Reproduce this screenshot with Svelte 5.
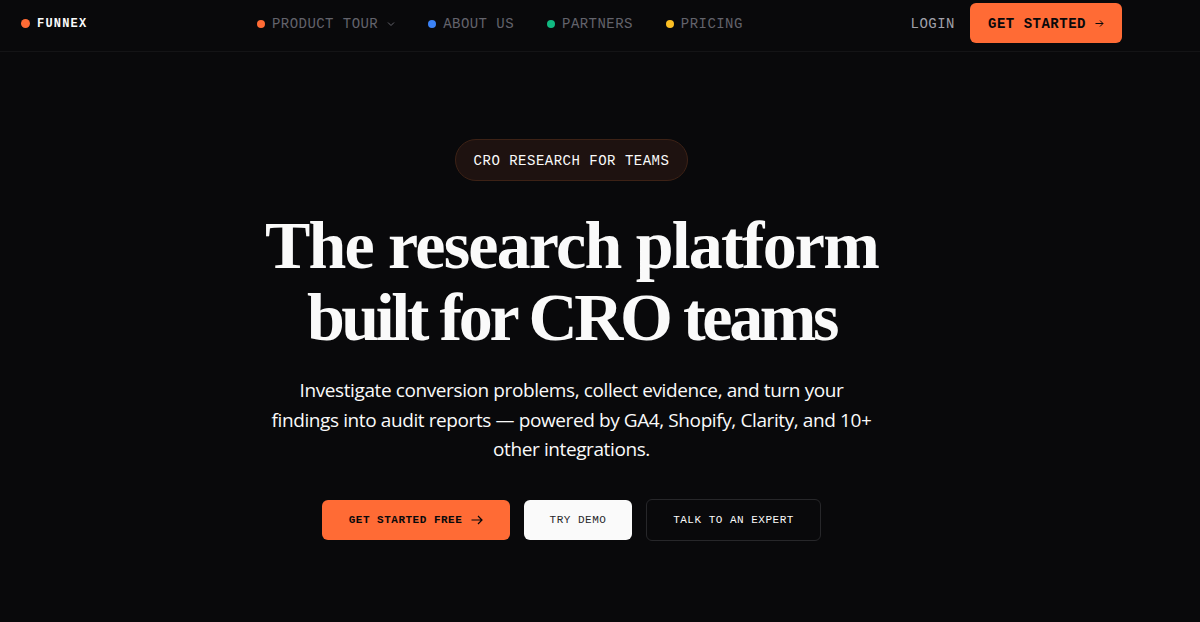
<script lang="ts">
    const links = [
        { label: 'PRODUCT TOUR', color: '#ff6b35', caret: true },
        { label: 'ABOUT US', color: '#3b82f6', caret: false },
        { label: 'PARTNERS', color: '#10b981', caret: false },
        { label: 'PRICING', color: '#fbbf24', caret: false }
    ];
</script>

<div class="page">
    <header class="topbar">
        <div class="logo">
            <span class="logo-dot"></span>
            <span class="logo-text">FUNNEX</span>
        </div>

        <nav class="links">
            {#each links as link}
                <a class="link" href="#top">
                    <span class="dot" style="background: {link.color}"></span>
                    {link.label}
                    {#if link.caret}
                        <svg class="caret" width="8" height="6" viewBox="0 0 8 6" fill="none">
                            <path d="M1 1.5 4 4.5 7 1.5" stroke="currentColor" stroke-width="1" />
                        </svg>
                    {/if}
                </a>
            {/each}
        </nav>

        <div class="actions">
            <a class="login" href="#top">LOGIN</a>
            <a class="btn-top" href="#top">
                GET STARTED
                <svg width="9" height="9" viewBox="0 0 9 9" fill="none">
                    <path d="M0.5 4.5H8M5 1.5 8 4.5 5 7.5" stroke="currentColor" stroke-width="1" />
                </svg>
            </a>
        </div>
    </header>

    <main class="hero">
        <div class="pill">CRO RESEARCH FOR TEAMS</div>
        <h1>
            <span class="line-one">The research platform</span>
            <span class="line-two">built for CRO teams</span>
        </h1>
        <p>
            Investigate conversion problems, collect evidence, and turn your<br />
            findings into audit reports — powered by GA4, Shopify, Clarity, and 10+<br />
            other integrations.
        </p>
        <div class="cta">
            <a class="btn primary" href="#top">
                GET STARTED FREE
                <svg width="12" height="10" viewBox="0 0 12 10" fill="none">
                    <path d="M0.5 5H11M7 1 11 5 7 9" stroke="currentColor" stroke-width="1.2" />
                </svg>
            </a>
            <a class="btn light" href="#top">TRY DEMO</a>
            <a class="btn ghost" href="#top">TALK TO AN EXPERT</a>
        </div>
    </main>
</div>

<style>
    :global(body) {
        background: #09090b;
    }

    .page {
        height: 622px;
        overflow: hidden;
        background: #09090b;
        color: #fafafa;
    }

    a {
        text-decoration: none;
    }

    .topbar {
        height: 46px;
        padding: 0 78px 5px 21px;
        display: flex;
        align-items: center;
        border-bottom: 1px solid #141416;
    }

    .logo {
        width: 236px;
        padding-top: 1px;
        display: flex;
        align-items: center;
        gap: 7px;
    }

    .logo-dot {
        width: 9px;
        height: 9px;
        border-radius: 50%;
        background: #ff6b35;
    }

    .logo-text {
        font: 700 12px "Liberation Mono", monospace;
        letter-spacing: 1.2px;
        color: #fafafa;
    }

    .links {
        padding-top: 2px;
        display: flex;
        align-items: center;
        gap: 33px;
    }

    .link {
        display: flex;
        align-items: center;
        gap: 7px;
        font: 14px "Liberation Mono", monospace;
        letter-spacing: 0.45px;
        color: #63636b;
    }

    .dot {
        width: 8px;
        height: 8px;
        border-radius: 50%;
    }

    .caret {
        margin-left: 2px;
    }

    .actions {
        margin-left: auto;
        display: flex;
        align-items: center;
        gap: 15px;
    }

    .login {
        padding-top: 2px;
        font: 14px "Liberation Mono", monospace;
        letter-spacing: 0.5px;
        color: #a1a1aa;
    }

    .btn-top {
        height: 40px;
        width: 152px;
        padding-top: 1px;
        box-sizing: border-box;
        display: flex;
        align-items: center;
        justify-content: center;
        gap: 9px;
        border-radius: 6px;
        background: #ff6b35;
        color: #09090b;
        font: 700 14px "Liberation Mono", monospace;
        letter-spacing: 0.5px;
    }

    .hero {
        width: 1143px;
        display: flex;
        flex-direction: column;
        align-items: center;
        padding-top: 87px;
    }

    .pill {
        height: 42px;
        padding: 1px 18px 0;
        box-sizing: border-box;
        display: flex;
        align-items: center;
        border: 1px solid #3d2216;
        border-radius: 21px;
        background: #1e1210;
        font: 14px "Liberation Mono", monospace;
        letter-spacing: 0.5px;
        color: #fafafa;
    }

    h1 {
        margin: 28px 0 0;
        font: 700 68px/72px "Liberation Serif", serif;
        text-align: center;
        color: #fafafa;
    }

    h1 span {
        display: block;
    }

    .line-one {
        letter-spacing: -1.8px;
    }

    .line-two {
        letter-spacing: -3.4px;
    }

    p {
        margin: 23px 0 0;
        font: 400 19px/29.5px "Open Sans", sans-serif;
        letter-spacing: -0.4px;
        text-align: center;
        color: #fafafa;
    }

    .cta {
        margin-top: 34px;
        display: flex;
        align-items: center;
        gap: 14px;
    }

    .btn {
        height: 40px;
        box-sizing: border-box;
        display: flex;
        align-items: center;
        justify-content: center;
        gap: 9px;
        border-radius: 6px;
        font: 11px "Liberation Mono", monospace;
        letter-spacing: 0.5px;
    }

    .primary {
        width: 188px;
        background: #ff6b35;
        color: #09090b;
        font-weight: 700;
    }

    .light {
        width: 108px;
        background: #fafafa;
        color: #27272a;
    }

    .ghost {
        width: 175px;
        height: 42px;
        border: 1px solid #27272a;
        color: #fafafa;
    }
</style>
